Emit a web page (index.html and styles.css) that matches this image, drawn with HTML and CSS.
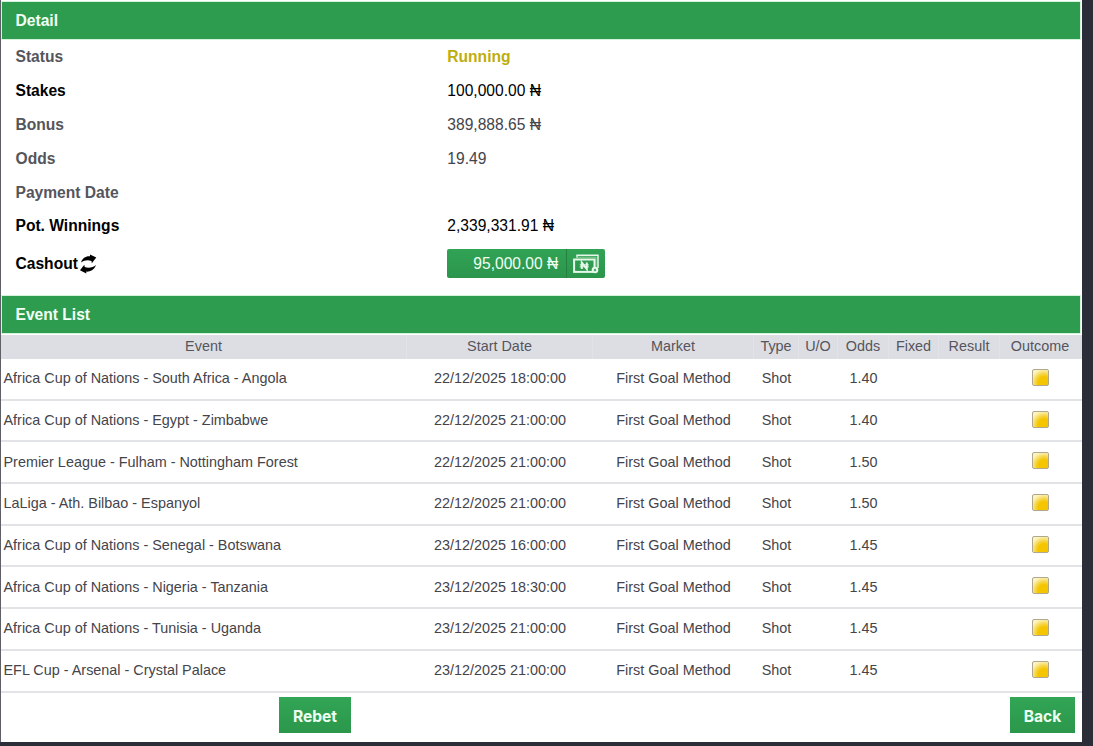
FILE: index.html
```html
<!DOCTYPE html>
<html lang="en">
<head>
<meta charset="utf-8">
<title>Bet detail</title>
<link rel="stylesheet" href="styles.css">
</head>
<body>
<main class="panel">
  <h2 class="bar">Detail</h2>
  <dl class="details">
    <dt>Status</dt><dd class="running">Running</dd>
    <dt class="strong">Stakes</dt><dd class="strong">100,000.00 ₦</dd>
    <dt>Bonus</dt><dd>389,888.65 ₦</dd>
    <dt>Odds</dt><dd>19.49</dd>
    <dt>Payment Date</dt><dd></dd>
    <dt class="strong">Pot. Winnings</dt><dd class="strong">2,339,331.91 ₦</dd>
    <dt class="strong">Cashout<svg class="refresh" viewBox="0 0 18 20"><path d="M2 8.500C3.500 4 7 1.800 11 2.300L11 .6 17.300 3.600 12.800 9.200 12.500 7C8.500 5.500 5.500 6.300 2 8.500Z"/><path d="M17 11C15 16.500 10.500 17.900 7.300 17.600L7.300 19.600 1 16.300 5.300 10.700 5.700 13C9.500 14.500 14 13.500 17 11Z"/></svg></dt>
    <dd><button class="cashout"><span class="amount">95,000.00 ₦</span><span class="note"><svg viewBox="0 0 26 20"><path d="M4 4V1.200H25V14" fill="none" stroke="#e6f7e9" stroke-width="1.500"/><path d="M3 3.200H23V14" fill="none" stroke="#8fcb9f" stroke-width="1"/><rect x="1.100" y="5.500" width="20.400" height="12.400" fill="none" stroke="#e6f7e9" stroke-width="2"/><path d="M8.800 15V8.500L13.800 15V8.500" fill="none" stroke="#e6f7e9" stroke-width="2"/><path d="M6.800 10.800H15.800M6.800 12.800H15.800" fill="none" stroke="#e6f7e9" stroke-width="1"/><circle cx="22" cy="16" r="3.300" fill="#e6f7e9"/><circle cx="22" cy="16" r="1.200" fill="#4ea86a"/></svg></span></button></dd>
  </dl>
  <h2 class="bar">Event List</h2>
  <table class="events">
    <colgroup><col class="c-event"><col class="c-date"><col class="c-market"><col class="c-type"><col class="c-uo"><col class="c-odds"><col class="c-fixed"><col class="c-result"><col class="c-outcome"></colgroup>
    <thead><tr><th>Event</th><th>Start Date</th><th>Market</th><th>Type</th><th>U/O</th><th>Odds</th><th>Fixed</th><th>Result</th><th>Outcome</th></tr></thead>
    <tbody>
      <tr><td>Africa Cup of Nations - South Africa - Angola</td><td>22/12/2025 18:00:00</td><td>First Goal Method</td><td>Shot</td><td></td><td>1.40</td><td></td><td></td><td><i class="pending"></i></td></tr>
      <tr><td>Africa Cup of Nations - Egypt - Zimbabwe</td><td>22/12/2025 21:00:00</td><td>First Goal Method</td><td>Shot</td><td></td><td>1.40</td><td></td><td></td><td><i class="pending"></i></td></tr>
      <tr><td>Premier League - Fulham - Nottingham Forest</td><td>22/12/2025 21:00:00</td><td>First Goal Method</td><td>Shot</td><td></td><td>1.50</td><td></td><td></td><td><i class="pending"></i></td></tr>
      <tr><td>LaLiga - Ath. Bilbao - Espanyol</td><td>22/12/2025 21:00:00</td><td>First Goal Method</td><td>Shot</td><td></td><td>1.50</td><td></td><td></td><td><i class="pending"></i></td></tr>
      <tr><td>Africa Cup of Nations - Senegal - Botswana</td><td>23/12/2025 16:00:00</td><td>First Goal Method</td><td>Shot</td><td></td><td>1.45</td><td></td><td></td><td><i class="pending"></i></td></tr>
      <tr><td>Africa Cup of Nations - Nigeria - Tanzania</td><td>23/12/2025 18:30:00</td><td>First Goal Method</td><td>Shot</td><td></td><td>1.45</td><td></td><td></td><td><i class="pending"></i></td></tr>
      <tr><td>Africa Cup of Nations - Tunisia - Uganda</td><td>23/12/2025 21:00:00</td><td>First Goal Method</td><td>Shot</td><td></td><td>1.45</td><td></td><td></td><td><i class="pending"></i></td></tr>
      <tr><td>EFL Cup - Arsenal - Crystal Palace</td><td>23/12/2025 21:00:00</td><td>First Goal Method</td><td>Shot</td><td></td><td>1.45</td><td></td><td></td><td><i class="pending"></i></td></tr>
    </tbody>
  </table>
  <div class="actions"><button class="action rebet">Rebet</button><button class="action">Back</button></div>
</main>
</body>
</html>
```
FILE: styles.css
```css
* { box-sizing: border-box; }
body {
  margin: 0;
  height: 746px;
  overflow: hidden;
  background: #2b2d39;
  font-family: "Liberation Sans", Arial, sans-serif;
  color: #44444b;
}
.panel {
  width: 1082px;
  height: 742px;
  padding-top: 1px;
  background: #fff;
  border-left: 1px solid #5f6067;
}
.bar {
  height: 39px;
  margin: 0 1px 0 0;
  padding-left: 13.500px;
  border: 1px solid #d3f3da;
  background: #2d9c4e;
  color: #f2fff4;
  font-size: 15.600px;
  line-height: 37px;
}
.details {
  display: grid;
  grid-template-columns: 431.800px 1fr;
  grid-template-rows: repeat(6, 33.900px) 41px;
  align-items: center;
  height: 255px;
  margin: 0;
  padding-left: 14.500px;
  font-size: 15.600px;
  line-height: 20px;
}
dt { display: flex; align-items: center; font-weight: bold; color: #55555c; }
dd { margin: 0; }
.details .strong { color: #000; }
.details .running { color: #bdae0b; font-weight: bold; }
.refresh { width: 18px; height: 20px; margin-left: 1px; }
.cashout {
  display: flex;
  width: 158px;
  height: 29px;
  padding: 0;
  border: 0;
  border-radius: 2px;
  background: linear-gradient(#31a355, #2b954c);
  color: #f0fff2;
  font: 15.600px/30px "Liberation Sans", Arial, sans-serif;
}
.amount { width: 120px; height: 29px; padding-right: 8px; text-align: right; border-right: 1px solid #23803f; }
.note { display: flex; flex: 1; align-items: center; align-self: stretch; padding-left: 6px; }
.note svg { width: 26px; height: 20px; }
.events {
  width: 1081px;
  margin-top: 1px;
  table-layout: fixed;
  border-collapse: separate;
  border-spacing: 0;
  font-size: 14.400px;
  text-align: center;
}
.c-event { width: 406px; }
.c-date { width: 186px; }
.c-market { width: 161px; }
.c-type { width: 45px; }
.c-uo { width: 39px; }
.c-odds { width: 51px; }
.c-fixed { width: 50px; }
.c-result { width: 61px; }
.c-outcome { width: 82px; }
th {
  height: 24px;
  padding: 0 0 2px;
  background: #dddee4;
  border-right: 1px solid #e2e3e8;
  font-weight: normal;
  color: #55555c;
  line-height: 20px;
}
th:last-child { padding-right: 2px; border-right: 0; }
td {
  height: 41.700px;
  padding: 0 0 1px;
  border-bottom: 2px solid #e2e3e6;
  line-height: 20px;
  white-space: nowrap;
}
td:first-child { padding-left: 2.500px; text-align: left; }
td:last-child { padding-right: 1px; }
.pending {
  display: block;
  width: 17px;
  height: 17px;
  margin: -2px auto 0;
  border: 1px solid #b0a88c;
  border-radius: 2px;
  background: radial-gradient(circle at 75% 85%, #f5c500 0 35%, #f6d850 55%, #fdf3c0 80%);
}
.actions { display: flex; justify-content: space-between; padding: 4px 7px 0 278px; }
.action {
  width: 65px;
  height: 36px;
  padding: 3px 0 0;
  border: 0;
  background: linear-gradient(#32a556, #2b974b);
  color: #ecfff0;
  font: bold 15.600px Inter, sans-serif;
}
.rebet { width: 72px; }
```
